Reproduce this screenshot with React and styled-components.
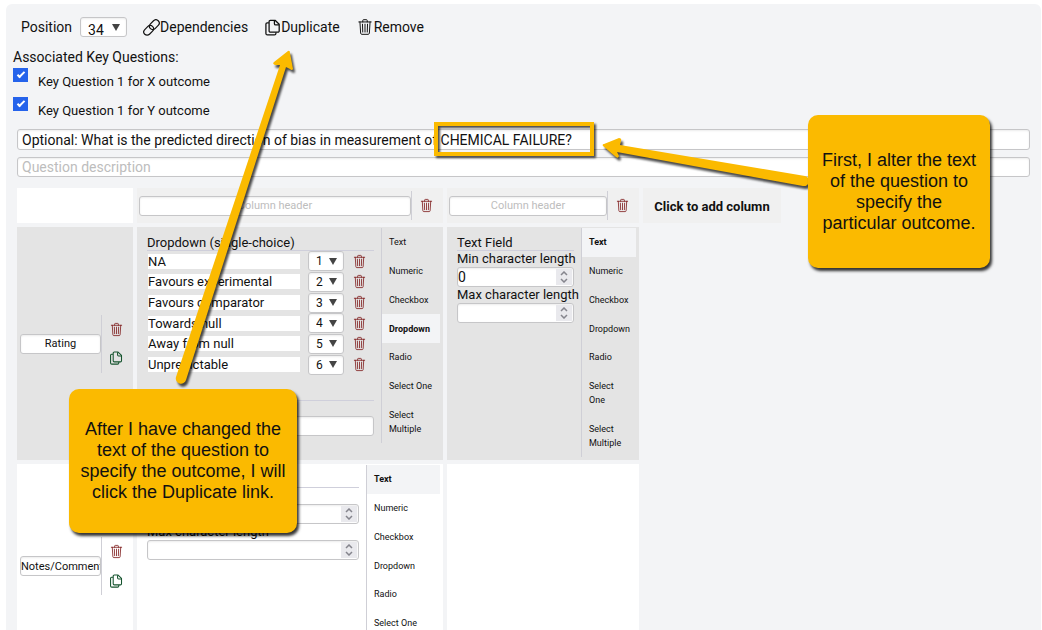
import React from "react";
import styled, { createGlobalStyle, css } from "styled-components";
import { IoTrashOutline } from "react-icons/io5";

const GlobalStyle = createGlobalStyle`
  *, *::before, *::after { box-sizing: border-box; }
  html { scrollbar-width: none; }
  body {
    margin: 0;
    background: #fff;
    color: #111;
    font-family: Roboto, "Liberation Sans", sans-serif;
    font-size: 14px;
  }
  button, input, select { font: inherit; color: inherit; margin: 0; }
`;

const Page = styled.div`
  position: relative;
  padding: 4px 1px 0 6px;
  overflow: hidden;
`;

const Panel = styled.main`
  min-height: 100vh;
  padding: 0 11px 0 7px;
  background: #f3f4f6;
  border-radius: 6px;
`;

const Toolbar = styled.div`
  display: flex;
  align-items: center;
  gap: 16px;
  height: 43px;
  padding: 3px 0 0 8px;
`;

const PositionLabel = styled.label`
  display: flex;
  align-items: center;
  gap: 8px;
`;

const ToolButton = styled.button`
  display: flex;
  align-items: center;
  padding: 0;
  border: 0;
  background: none;
  line-height: 20px;
  cursor: pointer;
`;

const TrashIcon = styled(IoTrashOutline)`
  path { stroke-width: 28px; }
`;

const field = css`
  border: 1px solid #c6c6c8;
  border-radius: 3px;
  background: #fff;
  box-shadow: inset 0 1px 2px rgba(0, 0, 0, 0.08);
  outline: none;
  &::placeholder { color: #bdbdbd; opacity: 1; }
`;

const SelectWrap = styled.span`
  display: grid;
  align-items: center;
  width: ${(p) => (p.$large ? 47 : 36)}px;
  > * { grid-area: 1 / 1; }
  > svg { justify-self: end; margin-right: 7px; pointer-events: none; }
`;

const SelectBox = styled.select`
  ${field}
  appearance: none;
  width: 100%;
  height: 20px;
  padding: ${(p) => (p.$large ? "4px 0 0 7px" : "0 0 0 7px")};
  font-size: ${(p) => (p.$large ? 14 : 12)}px;
  line-height: 16px;
`;

const KeyHeading = styled.h2`
  margin: 0;
  font-size: 14px;
  font-weight: 400;
  line-height: 21px;
`;

const KeyList = styled.ul`
  margin: 0;
  padding: 0;
  list-style: none;
`;

const KeyItem = styled.li`
  display: flex;
  height: 29px;
  font-size: 13px;
`;

const KeyLabel = styled.label`
  padding: 5px 0 0 10px;
  line-height: 18px;
`;

const Tick = styled.input`
  appearance: none;
  display: grid;
  place-items: center;
  width: 15px;
  height: 14px;
  background: #2563eb;
  &:checked::after {
    content: "";
    width: 8px;
    height: 4px;
    margin-bottom: 2px;
    border: solid #fff;
    border-width: 0 0 2px 2px;
    transform: rotate(-45deg);
  }
`;

const QuestionFields = styled.div`
  display: grid;
  gap: 7px;
  padding: 3px 0 7px 4px;
`;

const LongInput = styled.input`
  ${field}
  width: 100%;
  height: ${(p) => (p.$tall ? 21 : 20)}px;
  padding: 0 4px;
  line-height: 18px;
`;

const Grid = styled.table`
  table-layout: fixed;
  width: 772px;
  border-spacing: 4px;
`;

const Col = styled.col`
  width: ${(p) => p.$w}px;
`;

const Cell = styled.td`
  height: ${(p) => p.$h}px;
  padding: 0;
  vertical-align: top;
  background: ${(p) => p.$bg || "transparent"};
`;

const HeadCell = styled.th`
  height: 35px;
  padding: 0;
  font-weight: 400;
  background: ${(p) => p.$bg};
`;

const HeadInner = styled.div`
  display: flex;
  align-items: center;
  height: 29px;
  padding-left: 2px;
`;

const HeadInput = styled.input`
  ${field}
  flex: 1;
  min-width: 0;
  height: 20px;
  padding: 0;
  text-align: center;
  font-size: 11px;
`;

const IconStack = styled.div`
  display: flex;
  flex-direction: column;
  justify-content: space-around;
  align-items: center;
  align-self: stretch;
  width: 29px;
  margin: 0 3px 0 0;
  border-left: 1px solid #cfcfd6;
`;

const IconButton = styled.button`
  display: grid;
  place-items: center;
  padding: 0;
  border: 0;
  background: none;
  color: ${(p) => (p.$green ? "#14532d" : "#7f1d1d")};
  cursor: pointer;
`;

const AddColumn = styled.button`
  width: 100%;
  padding: 0;
  border: 0;
  background: none;
  font-size: 13px;
  font-weight: 700;
  cursor: pointer;
`;

const RowHead = styled.th`
  padding: 0;
  font-weight: 400;
  vertical-align: middle;
  background: ${(p) => p.$bg};
`;

const RowHeadInner = styled.div`
  display: flex;
  align-items: center;
  height: 58px;
  padding-left: 3px;
`;

const Split = styled.div`
  display: flex;
  padding: 1px 3px 0 10px;
`;

const Content = styled.div`
  flex: 1;
  min-width: 0;
  padding: 6px 7px 0 0;
  font-size: 13px;
`;

const FieldTitle = styled.h3`
  height: 17px;
  margin: 0;
  border-bottom: 1px solid #cfcfdb;
  font-size: 13px;
  font-weight: 400;
  line-height: 17px;
  white-space: nowrap;
`;

const NumberLabel = styled.label`
  display: block;
  line-height: 16px;
  white-space: nowrap;
`;

const NumberBox = styled.span`
  ${field}
  display: flex;
  height: 20px;
  padding: 1px 1px 1px 0;
`;

const NumberInput = styled.input`
  flex: 1;
  min-width: 0;
  padding: 0;
  border: 0;
  outline: none;
  background: none;
  font-size: 14px;
  appearance: textfield;
  &::-webkit-inner-spin-button { appearance: none; }
`;

const Spinner = styled.span`
  display: grid;
  place-items: center;
  width: 16px;
  background: #e9e9ed;
`;

const Options = styled.ul`
  display: grid;
  grid-auto-rows: 1fr;
  height: 124px;
  margin: 0;
  padding: 0 0 0 1px;
  list-style: none;
`;

const Option = styled.li`
  display: grid;
  grid-template-columns: 1fr 36px 14px;
  align-items: center;
  gap: 8px;
  padding-right: 8px;
`;

const OptionInput = styled.input`
  width: 100%;
  height: 15px;
  padding: 0;
  border: 0;
  outline: none;
  background: #fff;
`;

const NewOption = styled.div`
  margin-top: 25px;
  padding-top: 15px;
  border-top: 1px solid #cfcfdb;
`;

const Tabs = styled.div`
  display: flex;
  flex-direction: column;
  width: ${(p) => p.$w}px;
  min-height: ${(p) => p.$h}px;
  border-left: 1px solid #cfcfd6;
  white-space: ${(p) => (p.$oneLine ? "nowrap" : "normal")};
`;

const Tab = styled.button`
  flex: 1 0 auto;
  padding: 7px;
  border: 0;
  background: ${(p) => (p.$on ? "#f3f4f6" : "none")};
  font-size: 9px;
  font-weight: ${(p) => (p.$on ? 700 : 400)};
  line-height: 14px;
  text-align: left;
  cursor: pointer;
`;

const Highlight = styled.div`
  position: absolute;
  left: 434px;
  top: 122px;
  width: 160px;
  height: 34px;
  border: 4px solid #fbba00;
  filter: drop-shadow(2px 2px 1px rgba(0, 0, 0, 0.7));
  pointer-events: none;
`;

const Callout = styled.p`
  position: absolute;
  left: ${(p) => p.$x}px;
  top: ${(p) => p.$y}px;
  display: grid;
  place-items: center;
  width: ${(p) => p.$w}px;
  height: ${(p) => p.$h}px;
  margin: 0;
  border-radius: 10px;
  background: #fbba00;
  box-shadow: 2px 3px 3px rgba(0, 0, 0, 0.8);
  color: #111;
  font: 18px/21px "Liberation Sans", Arial, sans-serif;
  text-align: center;
`;

const Arrows = styled.svg`
  position: absolute;
  left: 0;
  top: 0;
  fill: #fbba00;
  filter: drop-shadow(2px 3px 1px rgba(0, 0, 0, 0.7));
  pointer-events: none;
`;

const LinkIcon = () => (
  <svg width="17" height="17" viewBox="0 0 17 17" fill="none" stroke="currentColor" strokeWidth="1.2" aria-hidden="true">
    <g transform="rotate(-45 8.5 8.5)">
      <rect x="-1" y="5.2" width="11" height="6.6" rx="3.3" />
      <rect x="7" y="5.2" width="11" height="6.6" rx="3.3" />
    </g>
  </svg>
);

const CopyIcon = ({ size }) => (
  <svg width={size} height={size} viewBox="0 0 16 16" fill="none" stroke="currentColor" strokeWidth="1.2" strokeLinejoin="round" aria-hidden="true">
    <path d="M6 1.2h4.4L14.3 5v6.2a1.2 1.2 0 0 1-1.2 1.2H6a1.2 1.2 0 0 1-1.2-1.2V2.4A1.2 1.2 0 0 1 6 1.2z" />
    <path d="M9.8 1.4v3c0 .8.4 1.2 1.2 1.2h3.1" />
    <path d="M4.6 3.6H3a1.2 1.2 0 0 0-1.2 1.2v8.8A1.4 1.4 0 0 0 3.2 15h6.6a1.4 1.4 0 0 0 1.4-1.4v-1" />
  </svg>
);

const Triangle = () => (
  <svg width="8" height="7" viewBox="0 0 8 7" fill="#444" aria-hidden="true">
    <path d="M0 0h8L4 7z" />
  </svg>
);

function Picker({ large, value, label, count }) {
  return (
    <SelectWrap $large={large}>
      <SelectBox $large={large} defaultValue={value} aria-label={label}>
        {Array.from({ length: count }, (_, i) => (
          <option key={i + 1}>{i + 1}</option>
        ))}
      </SelectBox>
      <Triangle />
    </SelectWrap>
  );
}

function NumberField({ label, value }) {
  return (
    <NumberLabel>
      {label}
      <NumberBox>
        <NumberInput type="number" defaultValue={value} />
        <Spinner>
          <svg width="8" height="12" viewBox="0 0 8 12" fill="none" stroke="#85858d" strokeWidth="1.5" aria-hidden="true">
            <path d="M1 4l3-3 3 3M1 8l3 3 3-3" />
          </svg>
        </Spinner>
      </NumberBox>
    </NumberLabel>
  );
}

function TextSettings({ min }) {
  return (
    <Content>
      <FieldTitle>Text Field</FieldTitle>
      <NumberField label="Min character length" value={min} />
      <NumberField label="Max character length" />
    </Content>
  );
}

const TYPES = ["Text", "Numeric", "Checkbox", "Dropdown", "Radio", "Select One", "Select Multiple"];

function TypeTabs({ active, width, height, oneLine }) {
  return (
    <Tabs $w={width} $h={height} $oneLine={oneLine}>
      {TYPES.map((t) => (
        <Tab key={t} type="button" $on={t === active}>{t}</Tab>
      ))}
    </Tabs>
  );
}

function Trash({ label }) {
  return (
    <IconButton type="button" aria-label={label}>
      <TrashIcon size={15} />
    </IconButton>
  );
}

function ColumnHeader() {
  return (
    <HeadCell $bg="#f0f0f0">
      <HeadInner>
        <HeadInput placeholder="Column header" aria-label="Column header" />
        <IconStack><Trash label="Remove column" /></IconStack>
      </HeadInner>
    </HeadCell>
  );
}

function RowHeader({ name, bg }) {
  return (
    <RowHead $bg={bg}>
      <RowHeadInner>
        <HeadInput defaultValue={name} aria-label="Row header" />
        <IconStack>
          <Trash label="Remove row" />
          <IconButton type="button" $green aria-label="Duplicate row">
            <CopyIcon size={14} />
          </IconButton>
        </IconStack>
      </RowHeadInner>
    </RowHead>
  );
}

const KEY_QUESTIONS = ["Key Question 1 for X outcome", "Key Question 1 for Y outcome"];
const OPTIONS = ["NA", "Favours experimental", "Favours comparator", "Towards null", "Away from null", "Unpredictable"];

export default function App() {
  return (
    <Page>
      <GlobalStyle />
      <Panel>
        <Toolbar>
          <PositionLabel>
            Position
            <Picker large value="34" label="Position" count={40} />
          </PositionLabel>
          <ToolButton type="button"><LinkIcon />Dependencies</ToolButton>
          <ToolButton type="button"><CopyIcon size={17} />Duplicate</ToolButton>
          <ToolButton type="button"><TrashIcon size={18} />Remove</ToolButton>
        </Toolbar>

        <KeyHeading>Associated Key Questions:</KeyHeading>
        <KeyList>
          {KEY_QUESTIONS.map((q, i) => (
            <KeyItem key={q}>
              <Tick type="checkbox" id={`kq-${i}`} defaultChecked />
              <KeyLabel htmlFor={`kq-${i}`}>{q}</KeyLabel>
            </KeyItem>
          ))}
        </KeyList>

        <QuestionFields>
          <LongInput
            $tall
            aria-label="Question"
            defaultValue="Optional: What is the predicted direction of bias in measurement of CHEMICAL FAILURE?"
          />
          <LongInput aria-label="Question description" placeholder="Question description" />
        </QuestionFields>

        <Grid>
          <colgroup>
            <Col $w={116} /><Col $w={306} /><Col $w={192} /><Col $w={138} />
          </colgroup>
          <thead>
            <tr>
              <HeadCell $bg="#fff" />
              <ColumnHeader />
              <ColumnHeader />
              <HeadCell $bg="#f0f0f0">
                <AddColumn type="button">Click to add column</AddColumn>
              </HeadCell>
            </tr>
          </thead>
          <tbody>
            <tr>
              <RowHeader name="Rating" bg="#e4e4e4" />
              <Cell $bg="#e4e4e4" $h={233}>
                <Split>
                  <Content>
                    <FieldTitle>Dropdown (single-choice)</FieldTitle>
                    <Options>
                      {OPTIONS.map((o, i) => (
                        <Option key={o}>
                          <OptionInput defaultValue={o} aria-label={`Option ${i + 1}`} />
                          <Picker value={String(i + 1)} label={`Order of ${o}`} count={6} />
                          <Trash label={`Remove ${o}`} />
                        </Option>
                      ))}
                    </Options>
                    <NewOption>
                      <LongInput aria-label="New option" />
                    </NewOption>
                  </Content>
                  <TypeTabs active="Dropdown" width={59} height={215} />
                </Split>
              </Cell>
              <Cell $bg="#e4e4e4">
                <Split>
                  <TextSettings min="0" />
                  <TypeTabs active="Text" width={55} height={229} />
                </Split>
              </Cell>
              <Cell />
            </tr>
            <tr>
              <RowHeader name="Notes/Comments" bg="#fff" />
              <Cell $bg="#fff" $h={204}>
                <Split>
                  <TextSettings />
                  <TypeTabs active="Text" width={74} height={201} oneLine />
                </Split>
              </Cell>
              <Cell $bg="#fff" />
              <Cell />
            </tr>
          </tbody>
        </Grid>
      </Panel>

      <Highlight />
      <Arrows width="1042" height="630" viewBox="0 0 1042 630" aria-hidden="true">
        <path d="M288 51Q290 50 290 53L293 69Q292 71 290 69L286 67L186 380A5 5 0 0 1 176 377L280 65L275 65Q272 64 274 62Z" />
        <path d="M603 146Q602 144 604 144L619 138Q622 138 621 141L620 145L805 176A5 5 0 0 1 803 186L617 152L619 156Q618 159 616 157Z" />
      </Arrows>
      <Callout $x={69} $y={389} $w={228} $h={144}>
        <span>After I have changed the<br />text of the question to<br />specify the outcome, I will<br />click the Duplicate link.</span>
      </Callout>
      <Callout $x={808} $y={115} $w={182} $h={153}>
        <span>First, I alter the text<br />of the question to<br />specify the<br />particular outcome.</span>
      </Callout>
    </Page>
  );
}
